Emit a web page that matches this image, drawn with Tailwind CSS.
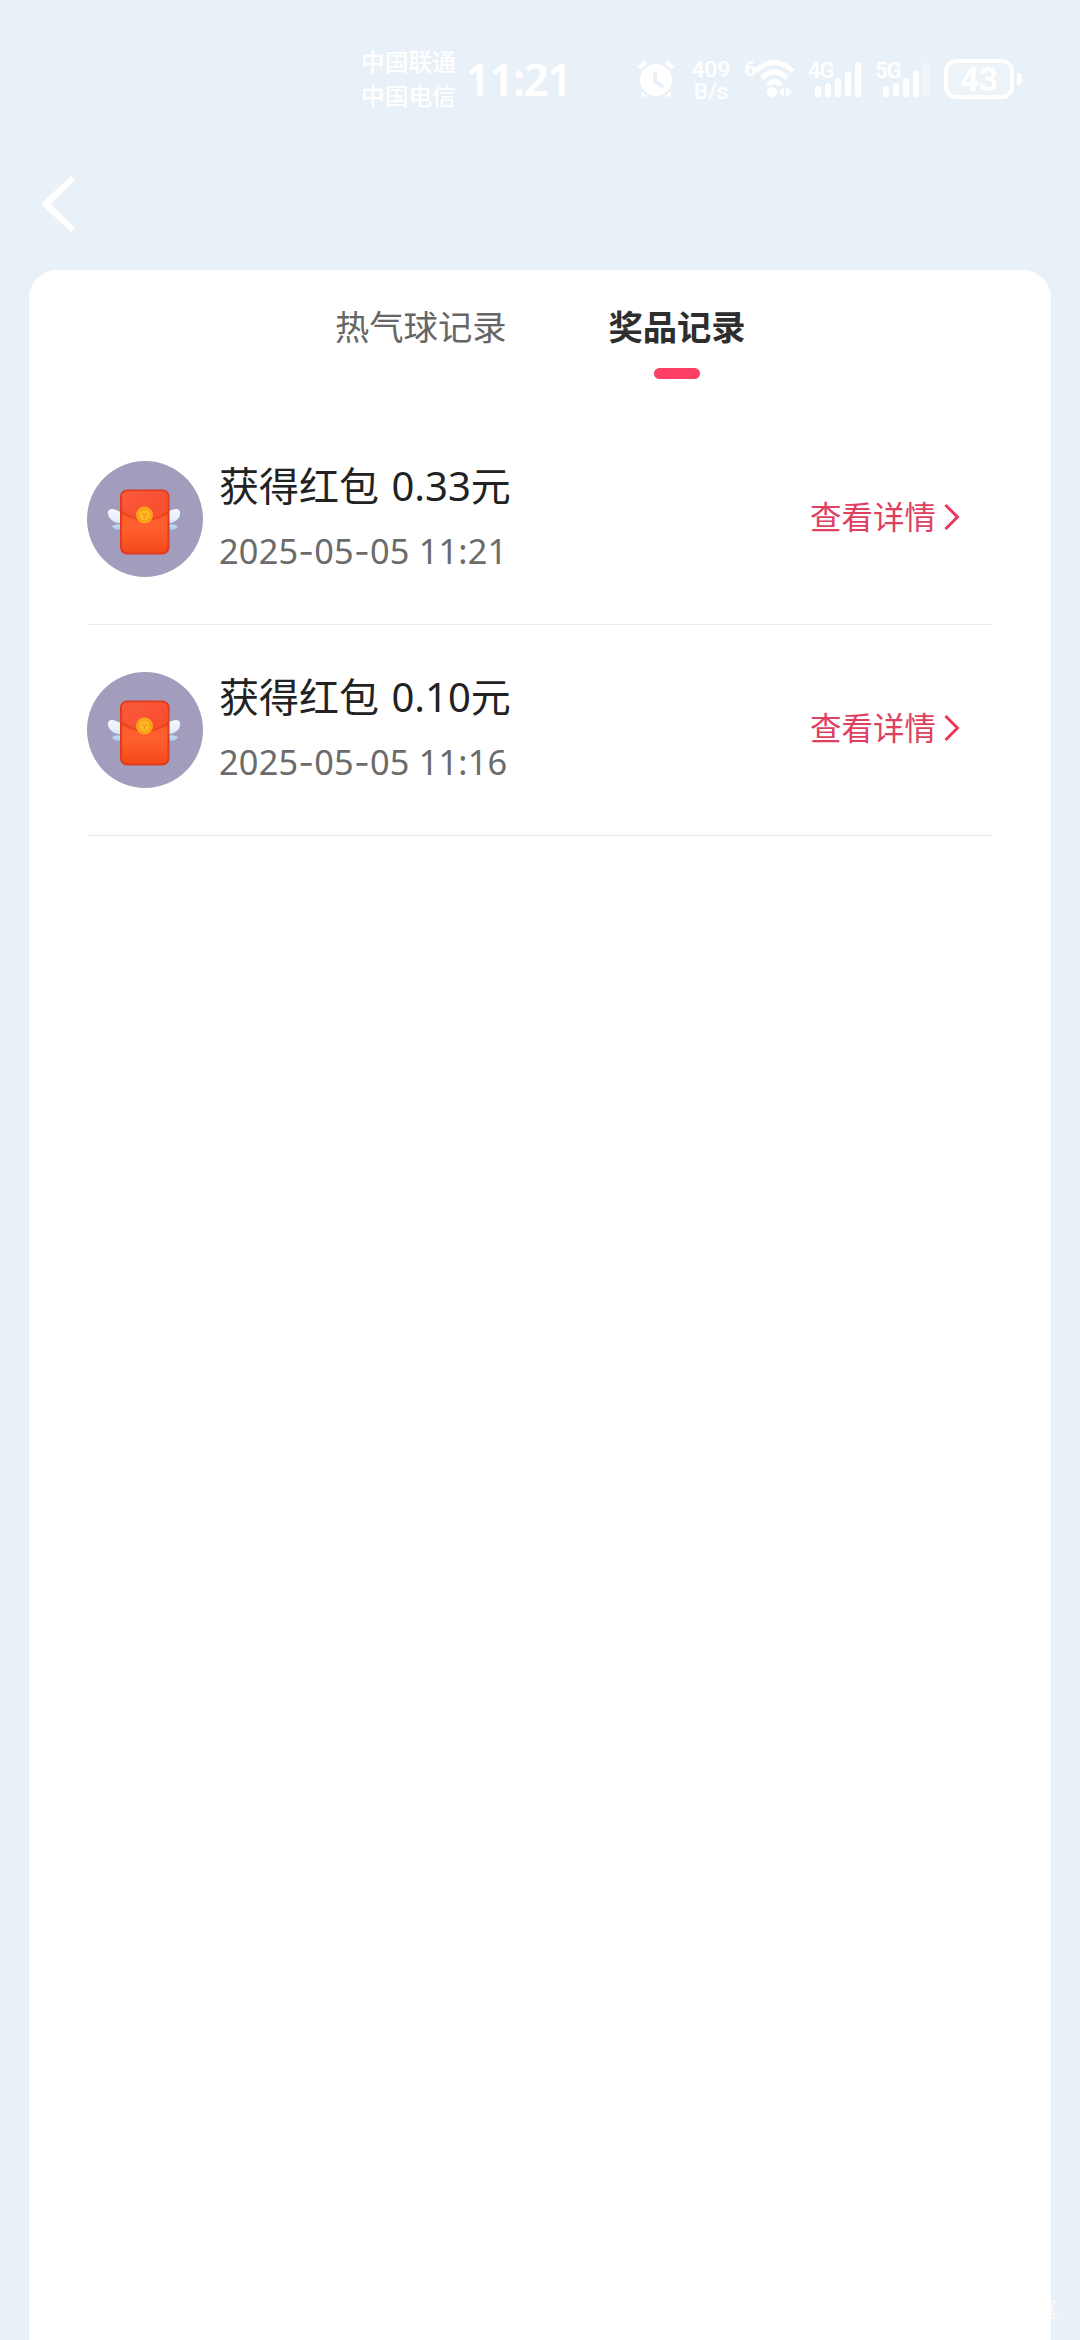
<!DOCTYPE html>
<html lang="zh-CN">
<head>
<meta charset="utf-8">
<title>奖品记录</title>
<script src="https://cdn.jsdelivr.net/npm/@tailwindcss/browser@4"></script>
</head>
<body class="relative flex h-[2340px] w-[1080px] flex-col overflow-hidden bg-[#e9f1f8] font-['Noto_Sans','Noto_Sans_CJK_SC',sans-serif]">

<svg class="absolute size-0">
  <defs>
    <linearGradient id="paper" x1="0" y1="0" x2="0" y2="1"><stop offset="0" stop-color="#fb5428"/><stop offset=".6" stop-color="#ff602e"/><stop offset="1" stop-color="#f4481a"/></linearGradient>
    <linearGradient id="flap" x1="0" y1="0" x2="1" y2="1"><stop offset="0" stop-color="#fb5a3c"/><stop offset="1" stop-color="#f64c2c"/></linearGradient>
    <linearGradient id="wing" x1="0" y1="0" x2="0" y2="1"><stop offset="0" stop-color="#f4f6fd"/><stop offset=".5" stop-color="#e2effa"/><stop offset="1" stop-color="#a5cdee"/></linearGradient>
    <symbol id="envelope" viewBox="0 0 116 116">
      <circle cx="58" cy="58" r="58" fill="#a29dbd"/>
      <g id="wings">
        <path d="M36 67c-4 3-9 2-11-2l3-1c4-1 7 0 8 1zM35 62c-6 1-13-3-14-9-1-5 4-6 8-4 4 1 6 4 6 7z" fill="url(#wing)"/>
        <path d="M80 67c4 3 9 2 11-2l-3-1c-4-1-7 0-8 1zM79 62c6 1 14-3 14-9 1-5-4-6-8-4-4 1-6 4-6 7z" fill="url(#wing)"/>
      </g>
      <rect x="34" y="29.500" width="47.500" height="63" rx="6" fill="url(#paper)" stroke="#df3b20" stroke-width="2"/>
      <path d="M35 49c8 6 15 8 23 8s16-2 23-8v4c-7 4-15 7-23 7s-16-3-23-7z" fill="#dc3416" opacity=".5"/>
      <path d="M35 49V36q0-5.500 5.500-5.500h34.500q5.500 0 5.500 5.500v13c-7 6-15 8-23 8s-15-2-22.500-8z" fill="url(#flap)"/>
      <circle cx="57.500" cy="54" r="8.500" fill="#fba51a"/>
      <circle cx="57.500" cy="54" r="6" fill="#fdb727" stroke="#f69a14" stroke-width="1"/>
      <path d="M55 52l2.500 2.500L60 52M57.500 54.500V58" fill="none" stroke="#f49b15" stroke-width="1.200"/>
    </symbol>
  </defs>
</svg>

<header class="flex h-[160px] shrink-0 items-start text-white">
  <div class="mt-[45px] ml-[361px] w-[96px] text-[23.700px] leading-[34px] font-medium whitespace-nowrap">中国联通<br>中国电信</div>
  <div class="mt-[49px] ml-[8px] w-[106px] text-[45px] leading-[60px] font-semibold tracking-[-1.900px] whitespace-nowrap">11:21</div>
  <svg class="mt-[60px] ml-[66px] h-[38px] w-[38px] shrink-0" viewBox="0 0 38 38" fill="none" stroke="#fff">
    <circle cx="19" cy="20" r="16" fill="#fff" stroke="none"/>
    <path d="M2 8l7-6M36 8l-7-6" stroke-width="4"/><path d="M4 37v-6l6 5zM34 37v-6l-6 5z" fill="#fff" stroke="none"/>
    <path d="M18 12v9l8 6" stroke="#e9f1f8" stroke-width="4"/>
  </svg>
  <div class="mt-[58px] ml-[16px] flex w-[40px] flex-col items-center font-[Roboto] text-[22.500px] leading-[22px] font-medium"><div>409</div><div>B/s</div></div>
  <div class="mt-[57px] ml-[13px] w-[11px] font-[Roboto] text-[21px] leading-[24px] font-bold">6</div>
  <svg class="mt-[59px] h-[40px] w-[42px] shrink-0" viewBox="0 0 42 40" fill="none" stroke="#fff" stroke-width="5">
    <path d="M1 12Q19 -5 38 12M7 19Q19 7 32 19M13 26Q19 19 26 26"/>
    <circle cx="17" cy="33" r="5" fill="#fff" stroke="none"/>
    <path d="M29 28v10l-5-5zM31 28v10l6-5z" fill="#fff" stroke="none"/>
  </svg>
  <div class="relative mt-[59px] ml-[11px] h-[40px] w-[55px]">
    <div class="absolute top-0 left-0 font-[Roboto] text-[22px] leading-[24px] font-semibold tracking-[-1px]">4G</div>
    <svg class="h-[40px] w-[55px]" viewBox="0 0 55 40" stroke="#fff" stroke-width="6" stroke-linecap="round"><path d="M10 30v5M20 27v8M30 22v13M40 15v20M50 6v29"/></svg>
  </div>
  <div class="relative mt-[59px] ml-[12px] h-[40px] w-[57px]">
    <div class="absolute top-0 left-0 font-[Roboto] text-[22px] leading-[24px] font-semibold tracking-[-1px]">5G</div>
    <svg class="h-[40px] w-[57px]" viewBox="0 0 57 40" stroke="#fff" stroke-width="6" stroke-linecap="round"><path d="M11 30v5M21 27v8M31 22v13M41 15v20"/><path d="M51 6v29" opacity=".3"/></svg>
  </div>
  <div class="mt-[59px] ml-[12px] flex h-[40px] w-[70px] items-center justify-center rounded-[12px] border-4 border-white bg-white/15 font-[Roboto] text-[33px] leading-none font-bold">43</div>
  <div class="mt-[73px] ml-[3px] h-[12px] w-[5px] rounded-r-[4px] bg-white"></div>
</header>

<nav class="h-[110px] shrink-0 pt-[14px] pl-[40px]">
  <svg class="h-[60px] w-[38px]" viewBox="0 0 38 60" fill="none" stroke="#fff" stroke-width="6.500"><path d="M33 4L6 30L33 56"/></svg>
</nav>

<main class="mx-[29px] flex-1 rounded-t-[28px] bg-white px-[58px]">
  <div class="flex h-[145px] pt-[32px] pl-[248px] text-[34.300px] leading-[50px]">
    <div class="w-[172px] whitespace-nowrap text-[#666]">热气球记录</div>
    <div class="ml-[101px] flex w-[138px] flex-col items-center font-bold whitespace-nowrap text-[#2e2e2e]">奖品记录
      <div class="mt-[16px] h-[11px] w-[46px] rounded-full bg-[#fc3f62]"></div>
    </div>
  </div>

  <div class="flex h-[210px] border-b border-[#ebebeb] pt-[46px]">
    <svg class="h-[116px] w-[116px] shrink-0"><use href="#envelope"/></svg>
    <div class="-mt-px ml-[16px] flex-1 whitespace-nowrap">
      <div class="text-[40px] leading-[52px] [word-spacing:2px] text-[#222]">获得红包 0.33元</div>
      <div class="mt-[14px] text-[34.300px] leading-[50px] tracking-[.200px] text-[#6b6b6b]">2025<span class="font-[Inter]">-</span>05<span class="font-[Inter]">-</span>05 11:21</div>
    </div>
    <div class="mt-[36px] mr-[33px] flex h-[40px] items-center text-[31.500px] leading-[40px] text-[#e0405f]">查看详情
      <svg class="ml-[8px] h-[28px] w-[16px]" viewBox="0 0 16 28" fill="none" stroke="#e8395c" stroke-width="3"><path d="M1.500 2L13.500 14L1.500 26"/></svg>
    </div>
  </div>

  <div class="flex h-[211px] border-b border-[#e6e6e6] pt-[47px]">
    <svg class="h-[116px] w-[116px] shrink-0"><use href="#envelope"/></svg>
    <div class="-mt-px ml-[16px] flex-1 whitespace-nowrap">
      <div class="text-[40px] leading-[52px] [word-spacing:2px] text-[#222]">获得红包 0.10元</div>
      <div class="mt-[14px] text-[34.300px] leading-[50px] tracking-[.200px] text-[#6b6b6b]">2025<span class="font-[Inter]">-</span>05<span class="font-[Inter]">-</span>05 11:16</div>
    </div>
    <div class="mt-[36px] mr-[33px] flex h-[40px] items-center text-[31.500px] leading-[40px] text-[#e0405f]">查看详情
      <svg class="ml-[8px] h-[28px] w-[16px]" viewBox="0 0 16 28" fill="none" stroke="#e8395c" stroke-width="3"><path d="M1.500 2L13.500 14L1.500 26"/></svg>
    </div>
  </div>
</main>

<div class="absolute top-[2297px] left-[1038px] text-[21px] leading-[24px] text-white/70">区</div>
</body>
</html>
